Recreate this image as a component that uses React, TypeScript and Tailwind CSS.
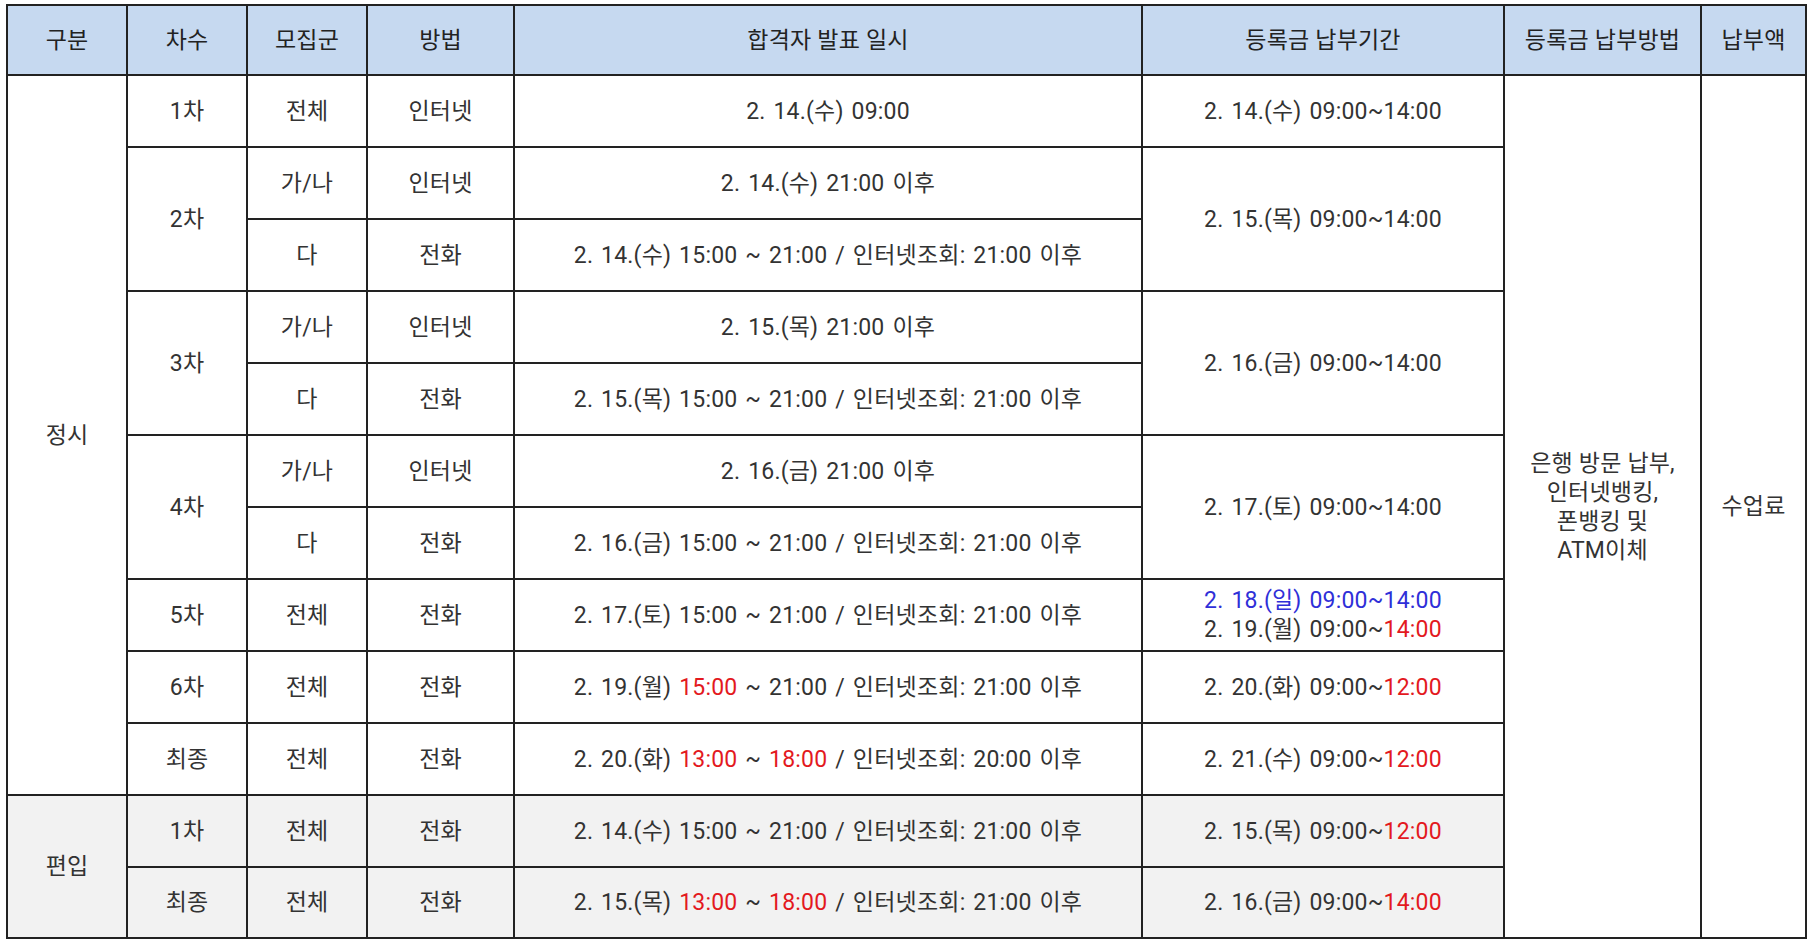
import type { FunctionComponent, ReactNode } from "react";

const R: FunctionComponent<{ children: ReactNode }> = ({ children }) => (
  <span className="text-[#e3191e]">{children}</span>
);

const Td: FunctionComponent<{
  children?: ReactNode;
  rowSpan?: number;
  gray?: boolean;
}> = ({ children, rowSpan, gray }) => (
  <td
    rowSpan={rowSpan}
    className={
      gray
        ? "border-2 border-[#222] bg-[#f2f2f2] text-center align-middle"
        : "border-2 border-[#222] bg-white text-center align-middle"
    }
  >
    {children}
  </td>
);

const headers = [
  "구분",
  "차수",
  "모집군",
  "방법",
  "합격자 발표 일시",
  "등록금 납부기간",
  "등록금 납부방법",
  "납부액",
];

export default function App() {
  return (
    <div className="min-h-[944px] w-[1809px] bg-white pl-[6px] pt-[4px]">
      <table className="w-[1799px] table-fixed border-collapse font-[Roboto,'Noto_Sans_CJK_KR',sans-serif] text-[23px] leading-[29px] tracking-[0.2px] [word-spacing:2px] text-[#333]">
        <colgroup>
          <col className="w-[120px]" />
          <col className="w-[120px]" />
          <col className="w-[120px]" />
          <col className="w-[147px]" />
          <col className="w-[628px]" />
          <col className="w-[362px]" />
          <col className="w-[197px]" />
          <col className="w-[105px]" />
        </colgroup>
        <thead>
          <tr className="h-[70px]">
            {headers.map((h) => (
              <th
                key={h}
                className="border-2 border-[#222] bg-[#c6d9f0] text-center font-normal text-[#222] [word-spacing:0px]"
              >
                {h}
              </th>
            ))}
          </tr>
        </thead>
        <tbody>
          <tr className="h-[72px]">
            <Td rowSpan={10}>정시</Td>
            <Td>1차</Td>
            <Td>전체</Td>
            <Td>인터넷</Td>
            <Td>2. 14.(수) 09:00</Td>
            <Td>2. 14.(수) 09:00~14:00</Td>
            <Td rowSpan={12}>
              <span className="[word-spacing:0px]">
                은행 방문 납부,
                <br />
                인터넷뱅킹,
                <br />
                폰뱅킹 및
                <br />
                ATM이체
              </span>
            </Td>
            <Td rowSpan={12}>수업료</Td>
          </tr>

          <tr className="h-[72px]">
            <Td rowSpan={2}>2차</Td>
            <Td>가/나</Td>
            <Td>인터넷</Td>
            <Td>2. 14.(수) 21:00 이후</Td>
            <Td rowSpan={2}>2. 15.(목) 09:00~14:00</Td>
          </tr>
          <tr className="h-[72px]">
            <Td>다</Td>
            <Td>전화</Td>
            <Td>2. 14.(수) 15:00 ~ 21:00 / 인터넷조회: 21:00 이후</Td>
          </tr>

          <tr className="h-[72px]">
            <Td rowSpan={2}>3차</Td>
            <Td>가/나</Td>
            <Td>인터넷</Td>
            <Td>2. 15.(목) 21:00 이후</Td>
            <Td rowSpan={2}>2. 16.(금) 09:00~14:00</Td>
          </tr>
          <tr className="h-[72px]">
            <Td>다</Td>
            <Td>전화</Td>
            <Td>2. 15.(목) 15:00 ~ 21:00 / 인터넷조회: 21:00 이후</Td>
          </tr>

          <tr className="h-[72px]">
            <Td rowSpan={2}>4차</Td>
            <Td>가/나</Td>
            <Td>인터넷</Td>
            <Td>2. 16.(금) 21:00 이후</Td>
            <Td rowSpan={2}>2. 17.(토) 09:00~14:00</Td>
          </tr>
          <tr className="h-[72px]">
            <Td>다</Td>
            <Td>전화</Td>
            <Td>2. 16.(금) 15:00 ~ 21:00 / 인터넷조회: 21:00 이후</Td>
          </tr>

          <tr className="h-[72px]">
            <Td>5차</Td>
            <Td>전체</Td>
            <Td>전화</Td>
            <Td>2. 17.(토) 15:00 ~ 21:00 / 인터넷조회: 21:00 이후</Td>
            <Td>
              <span className="text-[#2f2fd8]">2. 18.(일) 09:00~14:00</span>
              <br />
              2. 19.(월) 09:00~<R>14:00</R>
            </Td>
          </tr>
          <tr className="h-[72px]">
            <Td>6차</Td>
            <Td>전체</Td>
            <Td>전화</Td>
            <Td>
              2. 19.(월) <R>15:00</R> ~ 21:00 / 인터넷조회: 21:00 이후
            </Td>
            <Td>
              2. 20.(화) 09:00~<R>12:00</R>
            </Td>
          </tr>
          <tr className="h-[72px]">
            <Td>최종</Td>
            <Td>전체</Td>
            <Td>전화</Td>
            <Td>
              2. 20.(화) <R>13:00</R> ~ <R>18:00</R> / 인터넷조회: 20:00 이후
            </Td>
            <Td>
              2. 21.(수) 09:00~<R>12:00</R>
            </Td>
          </tr>

          <tr className="h-[72px]">
            <Td rowSpan={2} gray>
              편입
            </Td>
            <Td gray>1차</Td>
            <Td gray>전체</Td>
            <Td gray>전화</Td>
            <Td gray>2. 14.(수) 15:00 ~ 21:00 / 인터넷조회: 21:00 이후</Td>
            <Td gray>
              2. 15.(목) 09:00~<R>12:00</R>
            </Td>
          </tr>
          <tr className="h-[71px]">
            <Td gray>최종</Td>
            <Td gray>전체</Td>
            <Td gray>전화</Td>
            <Td gray>
              2. 15.(목) <R>13:00</R> ~ <R>18:00</R> / 인터넷조회: 21:00 이후
            </Td>
            <Td gray>
              2. 16.(금) 09:00~<R>14:00</R>
            </Td>
          </tr>
        </tbody>
      </table>
    </div>
  );
}
